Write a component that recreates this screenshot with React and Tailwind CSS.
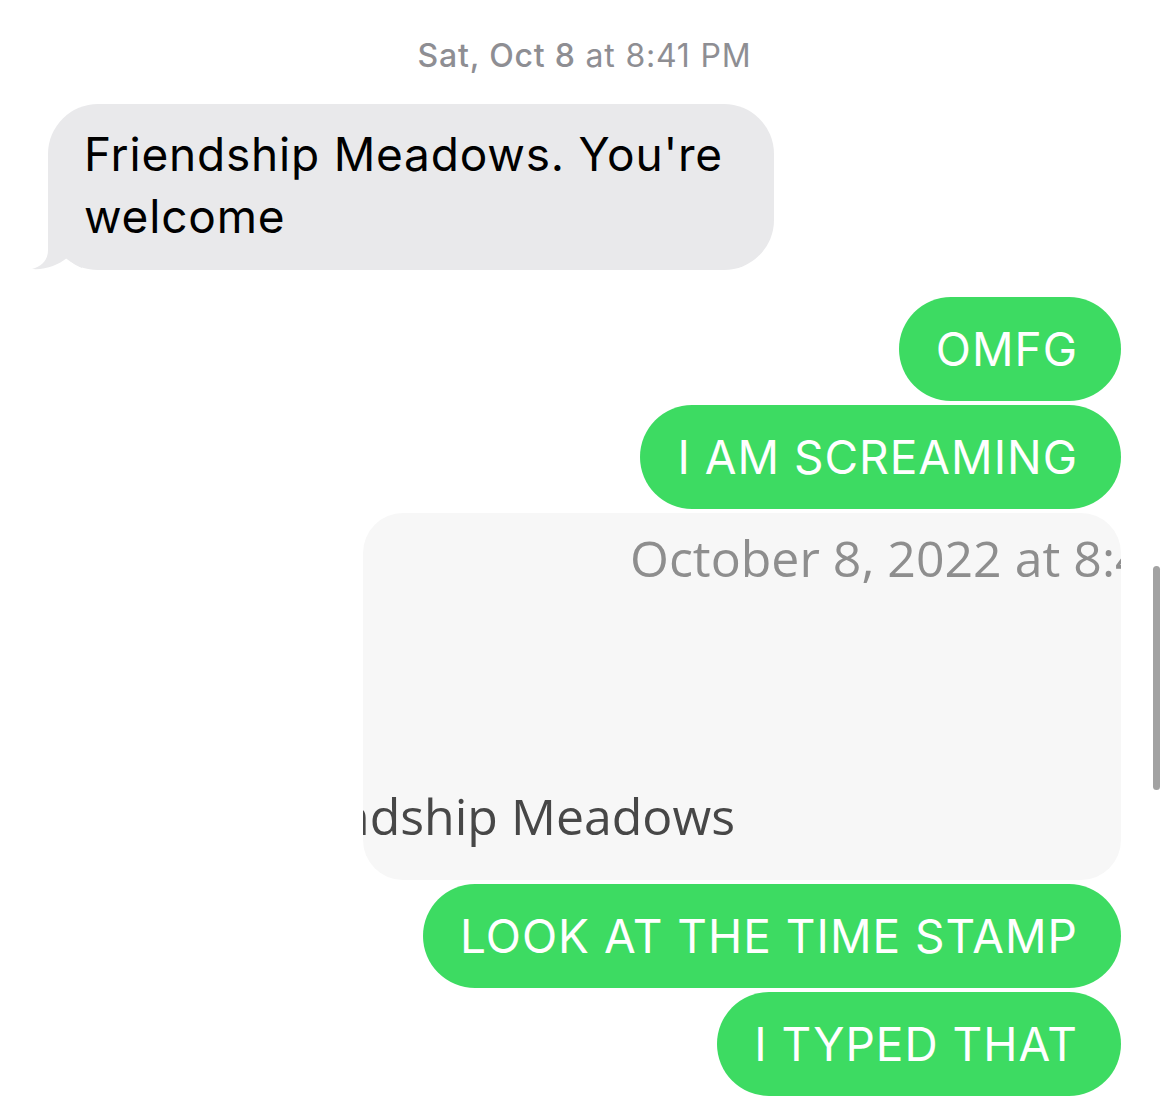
const SF = { fontFamily: "Inter, 'Liberation Sans', sans-serif" };

function Sent({ children }) {
  return (
    <div className="flex justify-end">
      <div className="flex h-[104px] items-center rounded-full bg-[#3ddb62] pl-[37px] pr-[43px] text-[46px] leading-none tracking-[1px] whitespace-nowrap text-white">
        {children}
      </div>
    </div>
  );
}

function LinkCard() {
  return (
    <div className="flex justify-end">
      <div
        className="flex h-[367px] w-[758px] flex-col overflow-hidden rounded-[40px] bg-[#f7f7f7] pt-[20px] text-[50px] leading-none"
        style={{ fontFamily: "'Open Sans', 'Noto Sans', sans-serif" }}
      >
        <div className="pl-[267px] whitespace-nowrap text-[#8e8e8e]">
          October 8, 2022 at 8:41 PM
        </div>
        <div className="mt-[208px] flex w-[372px] justify-end whitespace-nowrap text-[#474747]">
          <span>Friendship Meadows</span>
        </div>
      </div>
    </div>
  );
}

export default function App() {
  return (
    <div
      className="relative h-[1098px] w-full overflow-hidden bg-white pr-[46px] pl-[48px]"
      style={SF}
    >
      <div className="pt-[40px] text-center text-[32px] leading-none tracking-[0.8px] text-[#8e8e93]">
        <span className="font-medium">Sat, Oct 8</span> at 8:41 PM
      </div>

      <div className="mt-[32px] flex">
        <div className="relative w-[726px] rounded-[50px] bg-[#e9e9eb] pt-[19px] pr-[38px] pb-[23px] pl-[36px] text-[46px] leading-[62px] tracking-[0.8px] text-black">
          <svg
            className="absolute bottom-0 left-[-16px]"
            width="52"
            height="50"
            viewBox="0 0 52 50"
          >
            <path
              d="M16 0 L16 30 C16 40 10 46 0 49 C14 50 26 45 35 38 C40 43 45 46 50 48 L50 0 Z"
              fill="#e9e9eb"
            />
          </svg>
          <span className="relative">Friendship Meadows. You're welcome</span>
        </div>
      </div>

      <div className="mt-[27px] flex flex-col gap-[4px]">
        <Sent>OMFG</Sent>
        <Sent>I AM SCREAMING</Sent>
        <LinkCard />
        <Sent>LOOK AT THE TIME STAMP</Sent>
        <Sent>I TYPED THAT</Sent>
      </div>

      <div className="absolute top-[566px] left-[1153px] h-[224px] w-[7px] rounded-full bg-[#a2a2a2]" />
    </div>
  );
}
